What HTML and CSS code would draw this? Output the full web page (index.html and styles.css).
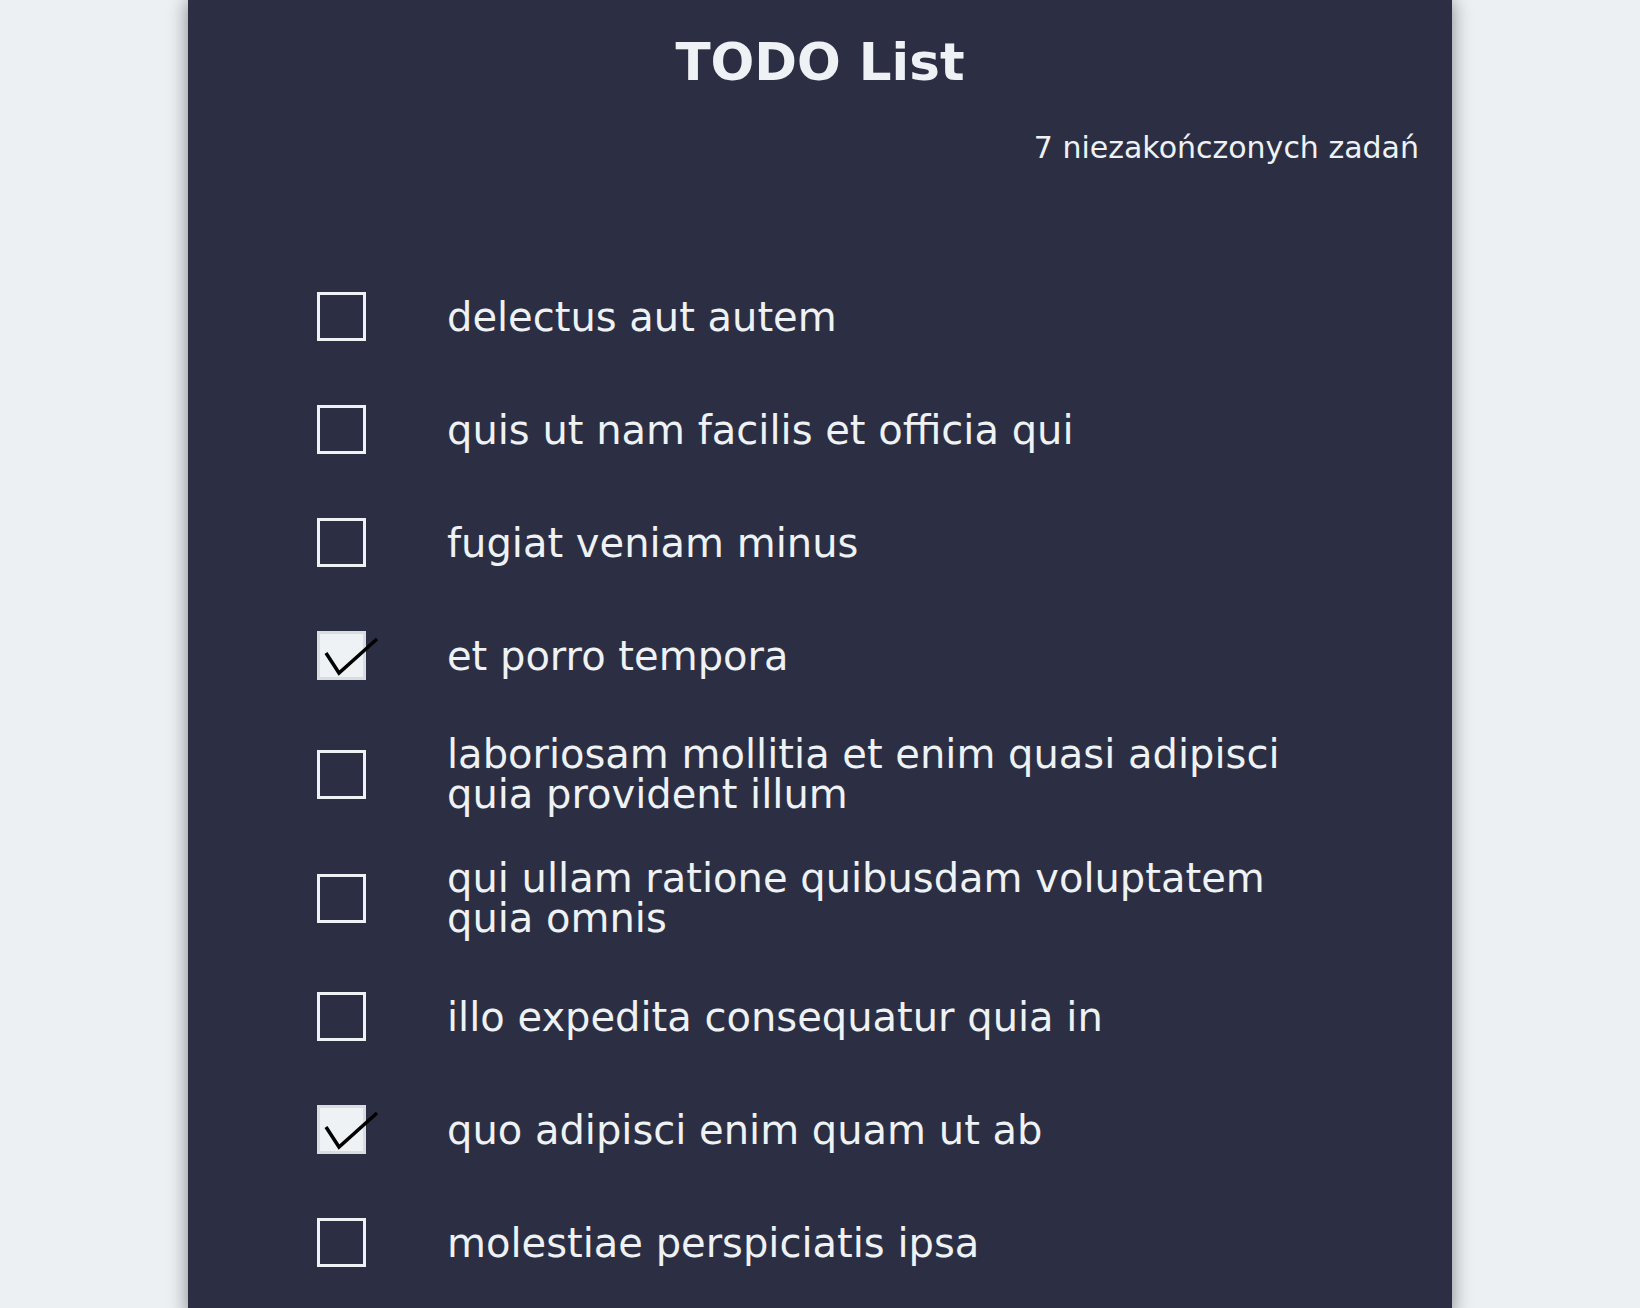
FILE: index.html
```html
<!DOCTYPE html>
<html lang="pl">
<head>
<meta charset="utf-8">
<title>TODO List</title>
<link rel="stylesheet" href="styles.css">
</head>
<body>
<main class="card">
  <h1 class="title">TODO List</h1>
  <p class="counter">7 niezakończonych zadań</p>
  <ul class="todos">
    <li class="todo"><span class="box"></span><span class="label">delectus aut autem</span></li>
    <li class="todo"><span class="box"></span><span class="label">quis ut nam facilis et officia qui</span></li>
    <li class="todo"><span class="box"></span><span class="label">fugiat veniam minus</span></li>
    <li class="todo"><span class="box checked"><svg class="check" viewBox="0 0 64 48" width="64" height="48"><polyline points="6,19 19,39 57,5" fill="none" stroke="#000" stroke-width="3.5"/></svg></span><span class="label">et porro tempora</span></li>
    <li class="todo"><span class="box"></span><span class="label">laboriosam mollitia et enim quasi adipisci quia provident illum</span></li>
    <li class="todo"><span class="box"></span><span class="label">qui ullam ratione quibusdam voluptatem quia omnis</span></li>
    <li class="todo"><span class="box"></span><span class="label">illo expedita consequatur quia in</span></li>
    <li class="todo"><span class="box checked"><svg class="check" viewBox="0 0 64 48" width="64" height="48"><polyline points="6,19 19,39 57,5" fill="none" stroke="#000" stroke-width="3.5"/></svg></span><span class="label">quo adipisci enim quam ut ab</span></li>
    <li class="todo"><span class="box"></span><span class="label">molestiae perspiciatis ipsa</span></li>
  </ul>
</main>
</body>
</html>
```
FILE: styles.css
```css
html, body {
  margin: 0;
  padding: 0;
}
body {
  background: #ecf0f3;
  font-family: "DejaVu Sans", "Noto Sans", sans-serif;
  color: #eef2f5;
}
.card {
  width: 1264px;
  box-sizing: border-box;
  margin: 0 auto;
  background: #2c2f43;
  box-shadow: 0 0 18px rgba(0, 0, 0, 0.45);
  padding: 32px 33px 40px 33px;
}
.title {
  margin: 0;
  font-size: 51.5px;
  line-height: 60px;
  font-weight: 700;
  text-align: center;
  color: #eef2f5;
}
.counter {
  margin: 38px 0 0;
  font-size: 30px;
  line-height: 36px;
  text-align: right;
  color: #eef2f5;
}
.todos {
  list-style: none;
  margin: 116px 0 0;
  padding: 0 96px;
  display: flex;
  flex-direction: column;
  gap: 44px;
}
.todo {
  display: flex;
  align-items: center;
  min-height: 69px;
}
.box {
  flex: none;
  width: 49px;
  height: 49px;
  box-sizing: border-box;
  border: 3px solid #eef2f5;
  position: relative;
}
.box.checked {
  background: #eef2f5;
  border-color: #d9dde2;
}
.check {
  position: absolute;
  left: 0;
  top: 0;
  overflow: visible;
}
.label {
  margin-left: 81px;
  font-size: 40px;
  line-height: 40px;
  color: #eef2f5;
}
```
